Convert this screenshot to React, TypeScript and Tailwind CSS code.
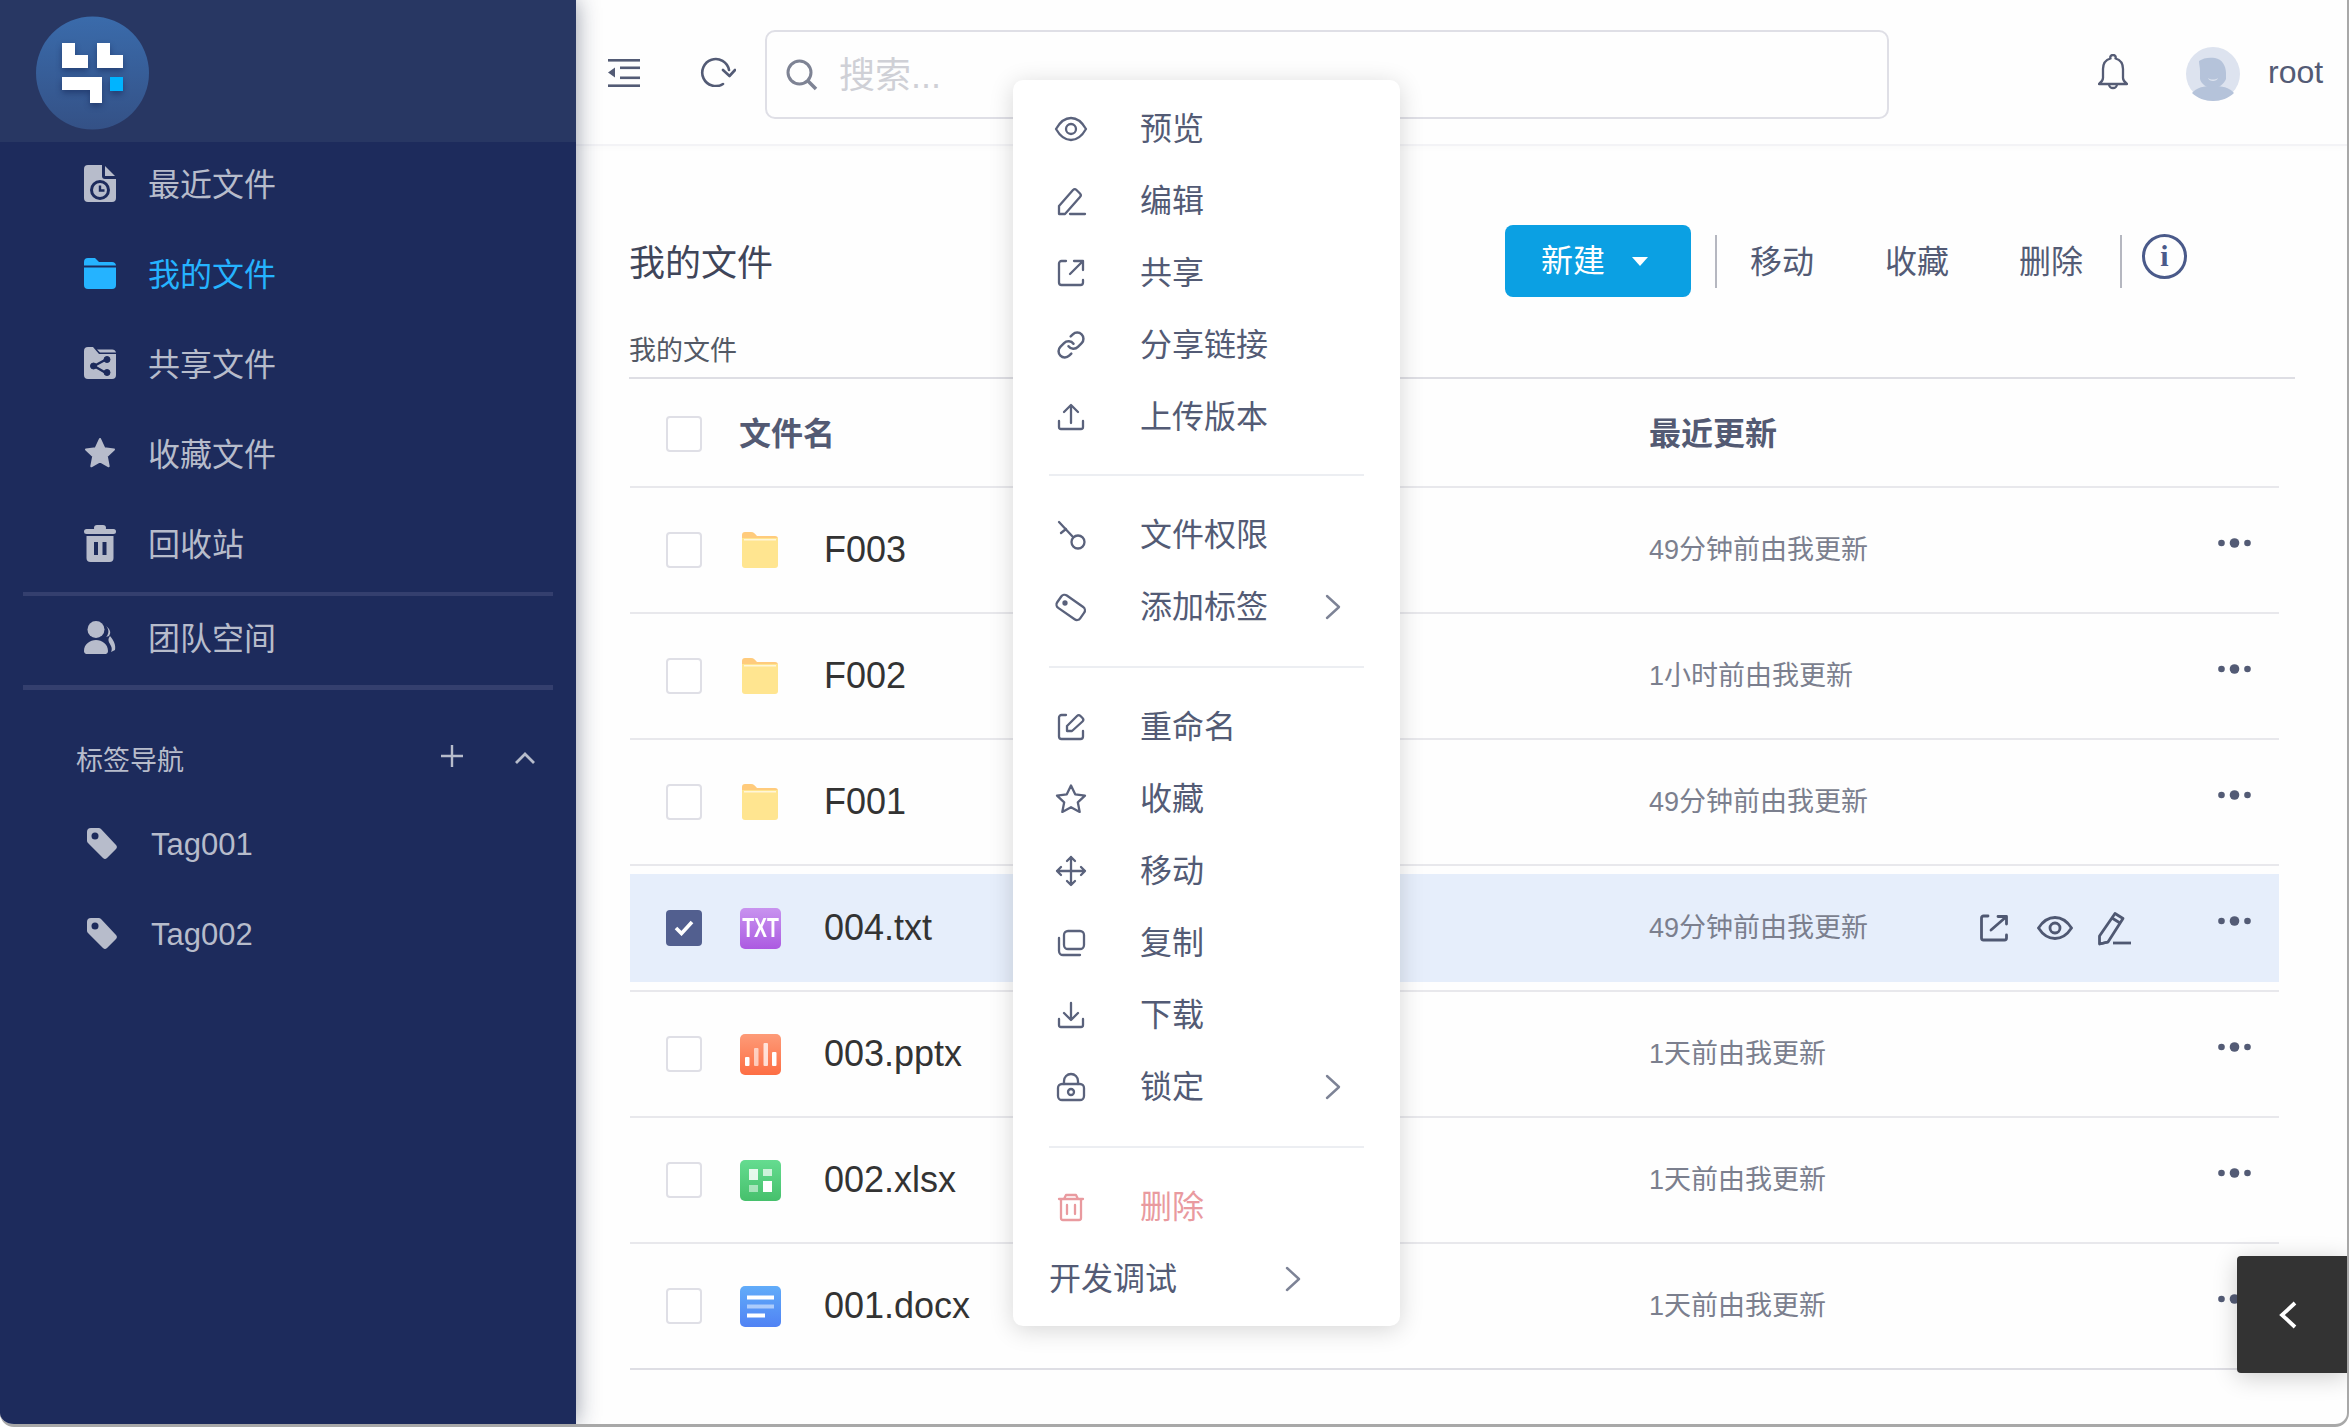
import type { ReactNode } from 'react'
import { Link } from 'lucide-react'

const NAVY = '#1d2b5c'

const StrokeIcon = ({ children, color = '#5a627c' }: { children: ReactNode; color?: string }) => (
  <svg width="34" height="34" viewBox="0 0 34 34" fill="none" stroke={color} strokeWidth="2.3" strokeLinecap="round" strokeLinejoin="round">
    {children}
  </svg>
)

const menuIcons: Record<string, ReactNode> = {
  eye: <StrokeIcon><path d="M2 17c4-7 9-11 15-11s11 4 15 11c-4 7-9 11-15 11S6 24 2 17z" /><circle cx="17" cy="17" r="5" /></StrokeIcon>,
  edit: <StrokeIcon><path d="M5 30v-8L19 6a2.5 2.5 0 0 1 3.5 0l3.5 3.5a2.5 2.5 0 0 1 0 3.5L11 30z" /><path d="M16 30h15" /></StrokeIcon>,
  share: <StrokeIcon><path d="M12 5H7.5A2.5 2.5 0 0 0 5 7.5v19A2.5 2.5 0 0 0 7.5 29h19a2.5 2.5 0 0 0 2.500-2.500V24" /><path d="M16 18L29 5M20 5h9v9" /></StrokeIcon>,
  upload: <StrokeIcon><path d="M17 23V6M10 12l7-7 7 7" /><path d="M5 21v6a2 2 0 0 0 2 2h20a2 2 0 0 0 2-2v-6" /></StrokeIcon>,
  key: <StrokeIcon><circle cx="24" cy="24" r="6.500" /><path d="M19 19L5 4M12 11l-5 4" /></StrokeIcon>,
  tag: <StrokeIcon><rect x="3" y="10" width="28" height="15" rx="4" transform="rotate(35 17 17)" /><circle cx="11" cy="13" r="1.500" fill="#5a627c" /></StrokeIcon>,
  rename: <StrokeIcon><path d="M12 5H7.500A2.500 2.500 0 0 0 5 7.500v19A2.500 2.500 0 0 0 7.500 29h19a2.500 2.500 0 0 0 2.500-2.500V21" /><path d="M13 21v-5L23 6a2.500 2.500 0 0 1 3.500 0l2 2a2.500 2.500 0 0 1 0 3.500L18 21z" /></StrokeIcon>,
  star: <StrokeIcon><path d="M17 3.500l4.200 8.800 9.800 1.300-7.200 6.700 1.900 9.600L17 25.200l-8.700 4.700 1.900-9.600L3 13.600l9.800-1.300z" /></StrokeIcon>,
  move: <StrokeIcon><path d="M17 3v28M3 17h28M13 7l4-4 4 4M13 27l4 4 4-4M7 13l-4 4 4 4M27 13l4 4-4 4" /></StrokeIcon>,
  copy: <StrokeIcon><rect x="10" y="5" width="20" height="18" rx="4" /><path d="M5 12v13a4 4 0 0 0 4 4h17" /></StrokeIcon>,
  download: <StrokeIcon><path d="M17 5v17M10 15l7 7 7-7" /><path d="M5 21v6a2 2 0 0 0 2 2h20a2 2 0 0 0 2-2v-6" /></StrokeIcon>,
  lock: <StrokeIcon><rect x="4" y="14" width="26" height="16" rx="4" /><path d="M10 14v-3a7 7 0 0 1 14 0v3" /><circle cx="17" cy="22" r="3" /></StrokeIcon>,
  trash: <StrokeIcon color="#e99a9f"><path d="M5 9h24M7 9v19a2 2 0 0 0 2 2h16a2 2 0 0 0 2-2V9M13 15v9M21 15v9M10 9l2-4h10l2 4" /></StrokeIcon>,
}

const Chevron = () => (
  <svg width="16" height="26" viewBox="0 0 16 26" fill="none" stroke="#7d8396" strokeWidth="2.400" strokeLinecap="round" strokeLinejoin="round">
    <path d="M2 2l12 11L2 24" />
  </svg>
)

const MenuItem = ({ icon, label, arrow, danger }: { icon: ReactNode; label: string; arrow?: boolean; danger?: boolean }) => (
  <div className={`flex h-[72px] items-center px-[36px] ${danger ? 'text-[#e99a9f]' : 'text-[#535b75]'}`}>
    <div className="ml-[5px] w-[34px] shrink-0">{icon}</div>
    <span className="ml-[52px] text-[32px]">{label}</span>
    {arrow && <div className="ml-auto mr-[23px]"><Chevron /></div>}
  </div>
)

const MenuDivider = ({ first }: { first?: boolean }) => (
  <div className={`mx-[36px] mb-[23px] h-[2px] bg-[#eceef2] ${first ? 'mt-[21px]' : 'mt-[23px]'}`} />
)

const ContextMenu = () => (
  <div className="absolute left-[1013px] top-[80px] w-[387px] rounded-[10px] bg-white pb-[11px] pt-[13px] shadow-[0_4px_24px_rgba(0,0,0,0.16)]">
    <MenuItem icon={menuIcons.eye} label="预览" />
    <MenuItem icon={menuIcons.edit} label="编辑" />
    <MenuItem icon={menuIcons.share} label="共享" />
    <MenuItem icon={<Link size={30} strokeWidth={2} color="#5a627c" className="ml-[2px]" />} label="分享链接" />
    <MenuItem icon={menuIcons.upload} label="上传版本" />
    <MenuDivider first />
    <MenuItem icon={menuIcons.key} label="文件权限" />
    <MenuItem icon={menuIcons.tag} label="添加标签" arrow />
    <MenuDivider />
    <MenuItem icon={menuIcons.rename} label="重命名" />
    <MenuItem icon={menuIcons.star} label="收藏" />
    <MenuItem icon={menuIcons.move} label="移动" />
    <MenuItem icon={menuIcons.copy} label="复制" />
    <MenuItem icon={menuIcons.download} label="下载" />
    <MenuItem icon={menuIcons.lock} label="锁定" arrow />
    <MenuDivider />
    <MenuItem icon={menuIcons.trash} label="删除" danger />
    <div className="flex h-[72px] items-center pl-[36px] text-[32px] text-[#535b75]">
      <span>开发调试</span>
      <div className="ml-[108px]"><Chevron /></div>
    </div>
  </div>
)

const Logo = () => (
  <svg width="113" height="114" viewBox="0 0 113 114" className="ml-[36px] mt-[16px]">
    <defs>
      <linearGradient id="logoBg" x1="0" y1="0" x2="0" y2="1">
        <stop offset="0" stopColor="#3a6bab" />
        <stop offset="1" stopColor="#345186" />
      </linearGradient>
    </defs>
    <circle cx="56.500" cy="57" r="56.500" fill="url(#logoBg)" />
    <g style={{ filter: 'drop-shadow(0 3px 3px rgba(10,25,70,0.45))' }}>
      <path d="M26 27h13v12h13v13H26z" fill="#fff" />
      <path d="M61 27h13v12h13v13H61z" fill="#fff" />
      <path d="M26 61h40v26H54V74H26z" fill="#fff" />
      <rect x="74" y="61" width="13" height="14" fill="#00b4ff" />
    </g>
  </svg>
)

const navIcons: Record<string, ReactNode> = {
  recent: (
    <svg width="32" height="37" viewBox="0 0 32 37" fill="currentColor">
      <path d="M4 0h14v11a3 3 0 0 0 3 3h11v19a4 4 0 0 1-4 4H4a4 4 0 0 1-4-4V4a4 4 0 0 1 4-4z" />
      <path d="M21 1l10 10H21z" />
      <circle cx="16" cy="25" r="8.500" fill="none" stroke={NAVY} strokeWidth="3" />
      <path d="M16 20.500V25.500h4.500" fill="none" stroke={NAVY} strokeWidth="2.400" />
    </svg>
  ),
  folder: (
    <svg width="32" height="32" viewBox="0 0 32 32" fill="currentColor">
      <path d="M0 5a4 4 0 0 1 4-4h7l4 4h13a4 4 0 0 1 4 3.500H0z" />
      <path d="M0 10.500h32V28a4 4 0 0 1-4 4H4a4 4 0 0 1-4-4z" />
    </svg>
  ),
  shared: (
    <svg width="32" height="32" viewBox="0 0 32 32" fill="currentColor">
      <path d="M0 4a4 4 0 0 1 4-4h5l6 7h17v21a4 4 0 0 1-4 4H4a4 4 0 0 1-4-4z" />
      <path d="M13 2.500h15a4 4 0 0 1 4 3h-16z" />
      <g stroke={NAVY} fill={NAVY}>
        <path d="M22 12.500L10 19l12 7" fill="none" strokeWidth="2.400" />
        <circle cx="23" cy="12.500" r="3" />
        <circle cx="9.500" cy="19" r="3" />
        <circle cx="23" cy="25.500" r="3" />
      </g>
    </svg>
  ),
  star: (
    <svg width="32" height="32" viewBox="0 0 32 32" fill="currentColor" stroke="currentColor" strokeWidth="2" strokeLinejoin="round">
      <path d="M16 2l4.300 9.200 9.700 1.300-7.200 6.800 1.900 10-8.700-5-8.700 5 1.900-10L2 12.500l9.700-1.300z" />
    </svg>
  ),
  trash: (
    <svg width="32" height="37" viewBox="0 0 32 37" fill="currentColor">
      <rect x="10" y="0" width="12" height="6" rx="3" />
      <rect x="0" y="4" width="32" height="5" rx="2.500" />
      <path d="M2.500 11h27v22a4 4 0 0 1-4 4h-19a4 4 0 0 1-4-4z" />
      <rect x="10" y="17" width="4" height="13" fill={NAVY} />
      <rect x="18.500" y="17" width="4" height="13" fill={NAVY} />
    </svg>
  ),
  team: (
    <svg width="32" height="33" viewBox="0 0 32 33" fill="currentColor">
      <circle cx="12" cy="8.500" r="8.500" />
      <path d="M2 33a3 3 0 0 1-2-3c0-7 6-11 12-11s12 4 12 11a3 3 0 0 1-2 3z" />
      <path d="M22 5c3 3 3 7 1 10l-1 1 3-1c2-3 2-6-3-10z" />
      <path d="M26 15c-3 4-1 6 1 10 1 2 1 4 0 6l4-2c1-5-1-9-5-14z" />
    </svg>
  ),
}

const NavItem = ({ icon, label, active }: { icon: ReactNode; label: string; active?: boolean }) => (
  <div className={`mb-[8px] flex h-[82px] items-center pl-[84px] text-[32px] ${active ? 'text-[#25b3ff]' : 'text-[#b7bccb]'}`}>
    <div className="w-[32px]">{icon}</div>
    <span className="ml-[32px] pt-[3px]">{label}</span>
  </div>
)

const TagIcon = () => (
  <svg width="32" height="32" viewBox="0 0 32 32" fill="currentColor">
    <path d="M1 4a4 4 0 0 1 4-4h7a4 4 0 0 1 3 1l15 16a3 3 0 0 1 0 4l-9 9a3 3 0 0 1-4 0L2 15a4 4 0 0 1-1-3z" />
    <circle cx="9" cy="8" r="3.500" fill={NAVY} />
  </svg>
)

const TagItem = ({ label }: { label: string }) => (
  <div className="flex h-[90px] items-center pl-[86px] text-[31px] text-[#b7bccb]">
    <TagIcon />
    <span className="ml-[33px] pt-[2px]">{label}</span>
  </div>
)

const Sidebar = () => (
  <aside className="relative z-10 flex w-[576px] shrink-0 flex-col bg-[#1d2b5c] shadow-[0_0_22px_rgba(20,30,60,0.45)]">
    <div className="h-[142px] bg-[#283763]"><Logo /></div>
    <NavItem icon={navIcons.recent} label="最近文件" />
    <NavItem icon={navIcons.folder} label="我的文件" active />
    <NavItem icon={navIcons.shared} label="共享文件" />
    <NavItem icon={navIcons.star} label="收藏文件" />
    <NavItem icon={navIcons.trash} label="回收站" />
    <div className="mx-[23px] h-[4px] bg-[#343f6e]" />
    <NavItem icon={navIcons.team} label="团队空间" />
    <div className="mx-[23px] -mt-[1px] h-[5px] bg-[#343f6e]" />
    <div className="mt-[40px] flex h-[60px] items-center pl-[76px] pr-[41px] text-[27px] text-[#b7bccb]">
      <span className="flex-1 pt-[2px]">标签导航</span>
      <svg width="22" height="22" viewBox="0 0 22 22" stroke="currentColor" strokeWidth="2.400" className="-mt-[8px]">
        <path d="M11 0v22M0 11h22" />
      </svg>
      <svg width="20" height="12" viewBox="0 0 20 12" fill="none" stroke="currentColor" strokeWidth="2.800" className="-mt-[4px] ml-[52px]">
        <path d="M1 11l9-9 9 9" />
      </svg>
    </div>
    <div className="mt-[9px]">
      <TagItem label="Tag001" />
      <TagItem label="Tag002" />
    </div>
  </aside>
)

const TopBar = () => (
  <header className="flex h-[146px] shrink-0 items-center border-b-2 border-[#f3f3f6] pl-[32px] shadow-[0_2px_6px_rgba(0,0,0,0.02)]">
    <svg width="32" height="28" viewBox="0 0 32 28" fill="#535b75" className="mt-[2px] shrink-0">
      <rect x="0" y="0" width="32" height="2.600" />
      <rect x="12" y="7.500" width="20" height="2.600" />
      <rect x="12" y="17.500" width="20" height="2.600" />
      <rect x="0" y="25.400" width="32" height="2.600" />
      <path d="M0 13.500l7-5v10z" />
    </svg>
    <svg width="36" height="30" viewBox="0 0 36 30" fill="none" stroke="#535b75" strokeWidth="2.600" strokeLinecap="round" strokeLinejoin="round" className="ml-[60px] shrink-0">
      <path d="M29 13A13.500 13.500 0 1 0 23 27" />
      <path d="M23 13l6.500 6L35 13" />
    </svg>
    <div className="ml-[29px] mt-[5px] flex h-[89px] w-[1124px] shrink-0 items-center rounded-[10px] border-2 border-[#dfdfe6] pl-[19px]">
      <svg width="32" height="32" viewBox="0 0 32 32" fill="none" stroke="#7e8394" strokeWidth="3">
        <circle cx="13.500" cy="13.500" r="11.500" />
        <path d="M21.500 21.500L30 30" strokeWidth="3.500" />
      </svg>
      <span className="ml-[21px] pt-[2px] text-[36px] text-[#cfd0d6]">搜索...</span>
    </div>
    <svg width="30" height="36" viewBox="0 0 30 36" fill="none" stroke="#555c75" strokeWidth="2.300" strokeLinejoin="round" className="ml-[209px] shrink-0">
      <path d="M15 1a2.500 2.500 0 0 1 2.500 3.500C23 6 25 10 25 15v9c0 3 2 4.500 4 6H1c2-1.500 4-3 4-6v-9c0-5 2-9 7.500-10.500A2.500 2.500 0 0 1 15 1z" />
      <path d="M11 30a4 4 0 0 0 8 0" />
    </svg>
    <svg width="54" height="54" viewBox="0 0 54 54" className="ml-[58px] mt-[4px] shrink-0">
      <circle cx="27" cy="27" r="27" fill="#dde3ef" />
      <path d="M13 14c4-3 10-4 16-3 7 1 11 8 11 15v6c-2 5-7 9-13 9s-12-4-13-9v-8c0-4-1-7-1-10z" fill="#b5c3da" />
      <path d="M6 46c5-6 12-7 21-7s16 1 21 7c-5 5-13 8-21 8S11 51 6 46z" fill="#b5c3da" />
      <path d="M22 31c3 2 7 2 10 0-1 4-9 4-10 0z" fill="#dde3ef" />
    </svg>
    <span className="ml-[28px] text-[32px] text-[#535b75]">root</span>
  </header>
)

const FolderIcon = () => (
  <svg width="36" height="36" viewBox="0 0 36 36" className="ml-[2px]">
    <path d="M0 3a3 3 0 0 1 3-3h6c3 0 4 2 6 4h18a3 3 0 0 1 3 3v6H0z" fill="#ffcb7c" />
    <path d="M0 6h36v27a3 3 0 0 1-3 3H3a3 3 0 0 1-3-3z" fill="#ffe590" />
    <rect x="2" y="7" width="32" height="1.500" fill="#fff6d8" />
  </svg>
)

const TxtIcon = () => (
  <div className="flex h-[41px] w-[41px] items-center justify-center overflow-hidden rounded-[5px] bg-linear-to-b from-[#c893ef] to-[#ac5ae1] text-[27px] font-bold leading-none text-white">
    <span className="inline-block scale-x-[0.72]">TXT</span>
  </div>
)

const PptIcon = () => (
  <svg width="41" height="41" viewBox="0 0 41 41">
    <defs>
      <linearGradient id="pptBg" x1="0" y1="0" x2="0" y2="1">
        <stop offset="0" stopColor="#fd9b78" />
        <stop offset="1" stopColor="#fd6e44" />
      </linearGradient>
    </defs>
    <rect width="41" height="41" rx="5" fill="url(#pptBg)" />
    <rect x="5" y="23" width="4.500" height="9" rx="1" fill="#fff" />
    <rect x="14" y="14" width="4.500" height="18" rx="1" fill="#fff" fillOpacity="0.6" />
    <rect x="23.500" y="9" width="4.500" height="23" rx="1" fill="#fff" fillOpacity="0.75" />
    <rect x="32" y="18" width="4.500" height="14" rx="1" fill="#fff" />
  </svg>
)

const XlsIcon = () => (
  <svg width="41" height="41" viewBox="0 0 41 41">
    <defs>
      <linearGradient id="xlsBg" x1="0" y1="0" x2="0" y2="1">
        <stop offset="0" stopColor="#65dc90" />
        <stop offset="1" stopColor="#46c06c" />
      </linearGradient>
    </defs>
    <rect width="41" height="41" rx="5" fill="url(#xlsBg)" />
    <rect x="9" y="9" width="9" height="11" fill="#fff" fillOpacity="0.85" />
    <rect x="23" y="9" width="9" height="7" fill="#fff" fillOpacity="0.7" />
    <rect x="9" y="25" width="9" height="7" fill="#fff" fillOpacity="0.5" />
    <rect x="23" y="21" width="9" height="11" fill="#fff" />
  </svg>
)

const DocIcon = () => (
  <svg width="41" height="41" viewBox="0 0 41 41">
    <defs>
      <linearGradient id="docBg" x1="0" y1="0" x2="0" y2="1">
        <stop offset="0" stopColor="#61acf9" />
        <stop offset="1" stopColor="#5082f4" />
      </linearGradient>
    </defs>
    <rect width="41" height="41" rx="5" fill="url(#docBg)" />
    <rect x="7" y="9.500" width="27" height="4" fill="#fff" />
    <rect x="7" y="18.500" width="27" height="4" fill="#fff" fillOpacity="0.5" />
    <rect x="7" y="27.500" width="18" height="4" fill="#fff" />
  </svg>
)

const Checkbox = ({ checked }: { checked?: boolean }) =>
  checked ? (
    <div className="flex h-[36px] w-[36px] shrink-0 items-center justify-center rounded-[4px] bg-[#525f8f]">
      <svg width="20" height="16" viewBox="0 0 20 16" fill="none" stroke="#fff" strokeWidth="3.600">
        <path d="M2 8l5.500 5.500L18 2" />
      </svg>
    </div>
  ) : (
    <div className="h-[36px] w-[36px] shrink-0 rounded-[4px] border-2 border-[#dfdfe6] bg-white" />
  )

const Dots = () => (
  <svg width="33" height="12" viewBox="0 0 33 12" fill="#535b75" className="mb-[14px] ml-auto mr-[28px]">
    <circle cx="3.500" cy="6" r="3.300" />
    <circle cx="16.500" cy="6" r="4.800" />
    <circle cx="29.500" cy="6" r="3.300" />
  </svg>
)

const RowActions = () => (
  <div className="flex items-center">
    <svg width="28" height="28" viewBox="0 0 28 28" fill="none" stroke="#4f5872" strokeWidth="2.800" strokeLinecap="round" strokeLinejoin="round">
      <path d="M8 2H3.500A2 2 0 0 0 1.500 4v20a2 2 0 0 0 2 2h21a2 2 0 0 0 2-2v-3" />
      <path d="M11 16L26 3M18 2.500h8.500V10" />
    </svg>
    <svg width="36" height="24" viewBox="0 0 36 24" fill="none" stroke="#4f5872" strokeWidth="2.800" className="ml-[29px]">
      <path d="M1.500 12C6 5 11.500 1.500 18 1.500S30 5 34.500 12C30 19 24.500 22.500 18 22.500S6 19 1.500 12z" />
      <circle cx="18" cy="12" r="5" />
    </svg>
    <svg width="33" height="35" viewBox="0 0 33 35" fill="none" stroke="#4f5872" strokeWidth="2.800" strokeLinejoin="round" className="ml-[25px]">
      <path d="M1.500 33v-8L17 2.500l8 5L10 31z" />
      <path d="M14 7l8 5M1.500 33L10 31" />
      <path d="M15 32h18" />
    </svg>
  </div>
)

const files = [
  { name: 'F003', time: '49分钟前由我更新', icon: <FolderIcon /> },
  { name: 'F002', time: '1小时前由我更新', icon: <FolderIcon /> },
  { name: 'F001', time: '49分钟前由我更新', icon: <FolderIcon /> },
  { name: '004.txt', time: '49分钟前由我更新', icon: <TxtIcon />, selected: true },
  { name: '003.pptx', time: '1天前由我更新', icon: <PptIcon /> },
  { name: '002.xlsx', time: '1天前由我更新', icon: <XlsIcon /> },
  { name: '001.docx', time: '1天前由我更新', icon: <DocIcon /> },
]

const FileTable = () => (
  <div className="ml-[1px] w-[1649px]">
    <div className="flex h-[109px] items-center border-b-2 border-[#e8e8ec] pl-[36px] pt-[2px] text-[32px] font-bold text-[#535a73]">
      <Checkbox />
      <span className="ml-[37px] w-[910px]">文件名</span>
      <span>最近更新</span>
    </div>
    {files.map((file, i) => (
      <div key={file.name} className={`flex h-[126px] items-center border-b-2 ${i === files.length - 1 ? 'border-[#dedee4]' : 'border-[#e8e8ec]'}`}>
        <div className={`flex h-[108px] w-full items-center pl-[36px] ${file.selected ? 'bg-[#e6eefb]' : ''}`}>
          <Checkbox checked={file.selected} />
          <div className="ml-[38px] w-[41px]">{file.icon}</div>
          <span className="ml-[43px] w-[825px] text-[36px] text-[#333]">{file.name}</span>
          <span className="w-[331px] text-[27px] text-[#7b7f8e]">{file.time}</span>
          {file.selected && <RowActions />}
          <Dots />
        </div>
      </div>
    ))}
  </div>
)

const Content = () => (
  <div className="pl-[53px] pr-[52px] pt-[79px]">
    <div className="flex h-[72px] items-center">
      <h1 className="flex-1 pt-[6px] text-[36px] text-[#3f4559]">我的文件</h1>
      <button className="flex h-[72px] w-[186px] items-center rounded-[8px] bg-[#0ba0e3] pl-[36px] text-[32px] text-white">
        新建
        <span className="ml-[27px] mt-[1px] h-0 w-0 border-x-[8px] border-t-[9px] border-x-transparent border-t-white" />
      </button>
      <div className="ml-[24px] h-[53px] w-[2px] bg-[#b5b7c0]" />
      <span className="ml-[33px] pt-[2px] text-[32px] text-[#535b75]">移动</span>
      <span className="ml-[71px] pt-[2px] text-[32px] text-[#535b75]">收藏</span>
      <span className="ml-[70px] pt-[2px] text-[32px] text-[#535b75]">删除</span>
      <div className="ml-[37px] h-[53px] w-[2px] bg-[#b5b7c0]" />
      <div className="mb-[10px] ml-[20px] flex h-[45px] w-[45px] items-center justify-center rounded-full border-[3px] border-[#4a5a8a] font-['Liberation_Serif',serif] text-[30px] font-bold leading-none text-[#4a5a8a]">
        i
      </div>
      <div className="w-[108px]" />
    </div>
    <div className="flex h-[82px] items-center border-b-2 border-[#dedee4] pt-[29px] text-[27px] text-[#535965]">
      我的文件
    </div>
    <FileTable />
  </div>
)

export default function App() {
  return (
    <div className="relative flex h-[1427px] w-[2349px] overflow-hidden rounded-b-[14px] border-b-[3px] border-r-2 border-[#a8a8a8] bg-[#fefefe] font-['Liberation_Sans','Noto_Sans_CJK_SC',sans-serif]">
      <Sidebar />
      <main className="flex min-w-0 flex-1 flex-col">
        <TopBar />
        <Content />
      </main>
      <ContextMenu />
      <div className="absolute right-0 top-[1256px] flex h-[117px] w-[110px] items-center justify-center rounded-l-[4px] bg-[#333] shadow-[0_4px_24px_rgba(0,0,0,0.2)]">
        <svg width="18" height="28" viewBox="0 0 18 28" fill="none" stroke="#fff" strokeWidth="3.800" className="mr-[8px]">
          <path d="M16 2L3 14l13 12" />
        </svg>
      </div>
    </div>
  )
}
